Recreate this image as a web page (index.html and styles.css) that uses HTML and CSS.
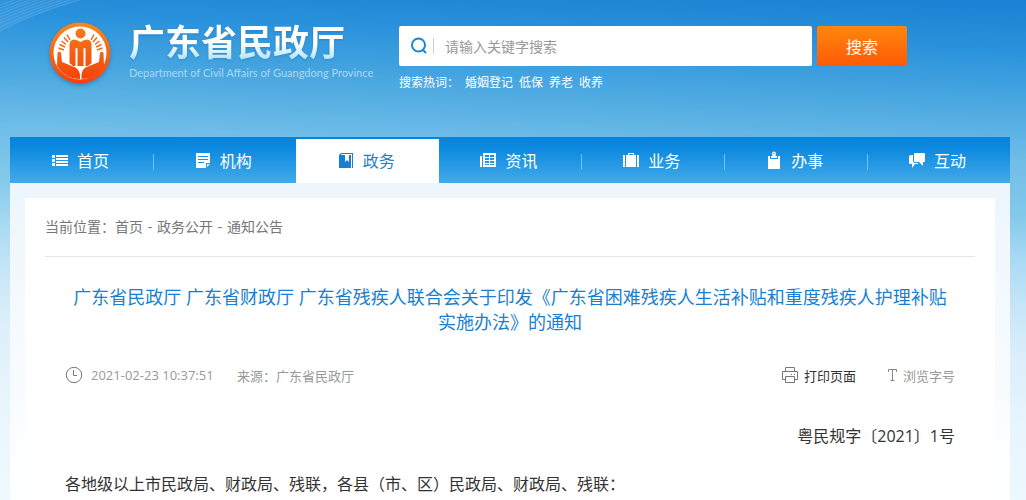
FILE: index.html
```html
<!DOCTYPE html>
<html lang="zh-CN">
<head>
<meta charset="utf-8">
<meta name="viewport" content="width=device-width, initial-scale=1">
<title>广东省民政厅</title>
<link rel="stylesheet" href="styles.css">
</head>
<body>
<svg class="waves" width="90" height="34" viewBox="0 0 90 34" aria-hidden="true">
  <path class="wave-fill" d="M0 0H80Q36 12 0 31Z"/>
  <path class="wave-line" d="M0 5L14 0M0 8L22 0M0 11L30 0M0 14Q18 6 38 0M0 17Q22 8 46 0M0 20Q26 9 54 0M0 23Q28 11 62 0M0 27Q32 12 70 0M0 31Q36 12 80 0"/>
</svg>
<div class="page">
  <header class="header">
    <a class="brand" href="#">
      <svg class="emblem" width="66" height="66" viewBox="0 0 66 66" aria-hidden="true">
        <defs>
          <linearGradient id="orange" x1="0" y1="0" x2="0" y2="1"><stop offset="0" stop-color="#f98a1c"/><stop offset="1" stop-color="#f4420c"/></linearGradient>
          <linearGradient id="figure" gradientUnits="userSpaceOnUse" x1="0" y1="8" x2="0" y2="58"><stop offset="0" stop-color="#f67a1a"/><stop offset="1" stop-color="#f4450d"/></linearGradient>
        </defs>
        <circle cx="33" cy="33" r="30.500" fill="url(#orange)"/>
        <circle cx="33" cy="33" r="26.500" fill="#fff"/>
        <g fill="url(#figure)">
          <circle cx="33.500" cy="13.500" r="5"/>
          <path d="M27 19.500Q30 19.500 33.500 22Q37 19.500 40 19.500Q44.500 20 44.500 25V43L41 46H26L22.500 43V25Q22.500 20 27 19.500Z"/>
          <path d="M10.500 33Q12.500 30.500 14 33L15 42L26 46.500Q32 48 33 55V59Q18 59 10 46Z"/>
          <path d="M56.500 33Q54.500 30.500 53 33L52 42L41 46.500Q35 48 34.500 55V59Q49 59 57 46Z"/>
        </g>
        <path d="M29.500 47V29M37.500 47V29" stroke="#fff" stroke-width="2" stroke-linecap="round"/>
        <path d="M31 48H36L33.500 53Z" fill="#fff"/>
        <path d="M11.500 28L17 30M12.500 24.500L18 27M14.500 21L19 24.500M17 17.500L21 22M20 14.500L23 20M55.500 28L50 30M54.500 24.500L49 27M52.500 21L48 24.500M50 17.500L46 22M47 14.500L44 20" stroke="#f4681a" stroke-width="1.500" fill="none"/>
      </svg>
      <span class="brand-text">
        <span class="brand-name">广东省民政厅</span>
        <span class="brand-sub">Department of Civil Affairs of Guangdong Province</span>
      </span>
    </a>
    <form class="search" role="search">
      <div class="search-row">
        <div class="search-box">
          <svg width="18" height="18" viewBox="0 0 18 18" fill="none" stroke="#1c86d2" stroke-width="2" aria-hidden="true"><circle cx="8.500" cy="8" r="6.500"/><path d="M12.500 12.500L16 16"/></svg>
          <input class="search-input" type="text" aria-label="搜索" placeholder="请输入关键字搜索">
        </div>
        <button class="search-button" type="submit">搜索</button>
      </div>
      <div class="hot"><span class="hot-label">搜索热词：</span><a href="#">婚姻登记</a><a href="#">低保</a><a href="#">养老</a><a href="#">收养</a></div>
    </form>
  </header>

  <nav class="nav">
    <a class="nav-item" href="#"><svg width="18" height="18" viewBox="0 0 18 18" fill="currentColor" aria-hidden="true"><path d="M1 4h3v3H1zM1 8h3v3H1zM1 12h3v3H1zM5 4h12v2H5zM5 7h12v2H5zM5 10h12v2H5zM5 13h12v2H5z"/></svg>首页</a>
    <a class="nav-item" href="#"><svg width="18" height="18" viewBox="0 0 18 18" fill="currentColor" aria-hidden="true"><path fill-rule="evenodd" d="M2 2h14v10h-4v5H2zM4 5v1h10V5zM4 8v1h10V8zM4 11v1h6v-1zM13 13h3l-3 3z"/></svg>机构</a>
    <a class="nav-item active" href="#" aria-current="page"><svg width="18" height="18" viewBox="0 0 18 18" fill="currentColor" aria-hidden="true"><path fill-rule="evenodd" d="M4 2h12v15h-1V3H4v1h10v13H2V4zM8 4v7l2-2 2 2V4z"/></svg>政务</a>
    <a class="nav-item" href="#"><svg width="18" height="18" viewBox="0 0 18 18" fill="currentColor" aria-hidden="true"><path fill-rule="evenodd" d="M4 2h13v14H4zM6 4v2h4V4zM11 4v2h4V4zM6 7v2h4V7zM11 7v2h4V7zM6 10v2h4v-2zM11 10v2h4v-2zM6 13v1h4v-1zM11 13v1h4v-1zM1 5h2v11H1z"/></svg>资讯</a>
    <a class="nav-item" href="#"><svg width="18" height="18" viewBox="0 0 18 18" fill="currentColor" aria-hidden="true"><path fill-rule="evenodd" d="M6 4V2h6v2h2v12H4V4zM7 3v1h4V3zM1 4h2v12H1zM15 4h2v12h-2z"/></svg>业务</a>
    <a class="nav-item" href="#"><svg width="18" height="18" viewBox="0 0 18 18" fill="currentColor" aria-hidden="true"><path fill-rule="evenodd" d="M3 5h2v3h8V5h2v13H3zM6 7V5h1.500V4a2 2 0 1 1 3 0v1H12v2zM8.200 2.500a.8.8 0 1 0 1.600 0a.8.8 0 1 0-1.600 0z"/></svg>办事</a>
    <a class="nav-item" href="#"><svg width="18" height="18" viewBox="0 0 18 18" fill="currentColor" aria-hidden="true"><path d="M7 2h9q1 0 1 1v7q0 1-1 1h-1v4l-4-4H7q-1 0-1-1V3q0-1 1-1zM4 4h1v6l1 2h4v1H7l-3 4v-4H2q-1 0-1-1V6q0-2 2-2z"/></svg>互动</a>
  </nav>

  <main class="content">
    <article class="sheet">
      <div class="crumbs"><span>当前位置：</span><a href="#">首页</a><span class="sep">-</span><a href="#">政务公开</a><span class="sep">-</span><a href="#">通知公告</a></div>
      <div class="article">
        <h1 class="title">广东省民政厅 广东省财政厅 广东省残疾人联合会关于印发《广东省困难残疾人生活补贴和重度残疾人护理补贴实施办法》的通知</h1>
        <div class="meta">
          <svg width="18" height="18" viewBox="0 0 18 18" fill="none" stroke="#777" aria-hidden="true"><circle cx="9" cy="9" r="7.700"/><path d="M8.500 4v5.500H12"/></svg>
          <time class="date" datetime="2021-02-23T10:37:51">2021-02-23 10:37:51</time>
          <span class="source">来源：广东省民政厅</span>
          <button class="tool print" type="button"><svg width="18" height="18" viewBox="0 0 18 18" fill="none" stroke="#777" aria-hidden="true"><path d="M4.500 5.500v-4h9v4M4.500 13.500h-3v-8h15v8h-3M4.500 10.500h9v6h-9zM10 8.500h1M13 8.500h1"/></svg>打印页面</button>
          <button class="tool size" type="button"><svg width="11" height="14" viewBox="0 0 11 14" fill="none" stroke="#888" aria-hidden="true"><path d="M1.500 4V1.500h8V4M5.500 1.500v11M3.500 12.500h4"/></svg>浏览字号</button>
        </div>
        <p class="doc-no">粤民规字〔2021〕1号</p>
        <p class="body-text">各地级以上市民政局、财政局、残联，各县（市、区）民政局、财政局、残联：</p>
      </div>
    </article>
  </main>
</div>
</body>
</html>
```
FILE: styles.css
```css
* { box-sizing: border-box; }

body {
  margin: 0;
  padding: 0 16px 0 10px;
  min-height: 100vh;
  font-family: "Open Sans", "Noto Sans CJK SC", sans-serif;
  font-size: 14px;
  color: #333;
  background: linear-gradient(182deg, #1a80d3 0, #2a92dc 50px, #4ba8e0 105px, #6fbde8 160px, #83c9ea 215px, #a9daf3 260px, #c8e6f8 310px, #dceffb 360px, #e8f5fd 430px, #eff9fe 530px) no-repeat #eff9fe;
}

a { color: inherit; text-decoration: none; }
button { font: inherit; border: 0; padding: 0; cursor: pointer; }

.waves { position: absolute; left: 0; top: 0; }
.wave-fill { fill: #fff; opacity: .06; }
.wave-line { fill: none; stroke: #9bd3f5; stroke-width: .6; opacity: .4; }

.page {
  max-width: 1000px;
  margin: 0 auto;
}

.header { position: relative; display: flex; height: 137px; padding: 20px 0 0 37px; }
.brand { display: flex; gap: 16px; width: 352px; flex: none; }
.emblem { flex: none; filter: drop-shadow(0 2px 2px rgba(20, 80, 140, .4)); }
.brand-text { display: flex; flex-direction: column; white-space: nowrap; }
.brand-name {
  font-size: 36px;
  line-height: 46px;
  font-weight: 700;
  color: transparent;
  background: linear-gradient(#fff 50%, #b5e4fb 85%);
  -webkit-background-clip: text;
  background-clip: text;
  filter: drop-shadow(0 1px 1px rgba(20, 90, 160, .3));
}
.brand-sub { font-size: 11px; line-height: 14px; color: #a9d8f5; font-family: Lato, sans-serif; }

.search { flex: 1; padding-top: 6px; max-width: 508px; }
.search-row { display: flex; gap: 5px; }
.search-box {
  display: flex;
  align-items: center;
  flex: 1;
  height: 40px;
  padding: 0 11px;
  background: #fff;
  border-radius: 2px;
}
.search-input {
  flex: 1;
  height: 16px;
  margin-left: 5px;
  padding: 0 0 0 11px;
  border: 0;
  border-left: 1px solid #ccc;
  outline: 0;
  font: inherit;
  background: none;
}
.search-input::placeholder { color: #999; }
.search-button {
  width: 90px;
  height: 40px;
  border-radius: 2px;
  font-size: 16px;
  color: #fff;
  background: linear-gradient(#ff870d, #fe5a06);
}
.hot { display: flex; gap: 6px; margin-top: 8px; font-size: 12px; line-height: 18px; color: #fff; }
.hot-label { width: 60px; }

.nav {
  display: grid;
  grid-template-columns: repeat(7, 1fr);
  height: 46px;
  padding-top: 2px;
  background: linear-gradient(#0783dc, #0a87de 20%, #42aaea);
}
.nav-item {
  position: relative;
  display: flex;
  align-items: center;
  justify-content: center;
  gap: 8px;
  padding: 0 3px 2px 0;
  font-size: 16px;
  color: #fff;
}
.nav-item::after {
  content: "";
  position: absolute;
  right: -1px;
  top: 15px;
  width: 1px;
  height: 16px;
  background: #75c3f1;
}
.nav-item:nth-child(2)::after,
.nav-item.active::after,
.nav-item:last-child::after { display: none; }
.nav-item.active { color: #1a7fd0; background: #fff; }

.content { padding: 15px 15px 0; background: linear-gradient(#edf6fd, #fdfeff 280px); }
.sheet { padding: 0 20px; background: #fff; }
.crumbs {
  display: flex;
  height: 59px;
  line-height: 58px;
  color: #777;
  border-bottom: 1px solid #e6e6e6;
}
.sep { width: 14px; text-align: center; }
.article { padding: 28px 20px 6px; }
.title {
  margin: 0;
  font-size: 18px;
  line-height: 25px;
  font-weight: 400;
  text-align: center;
  color: #1a7fd0;
}
.meta { display: flex; align-items: center; margin-top: 28px; height: 24px; font-size: 13px; color: #999; }
.date { margin-left: 8px; width: 128px; white-space: nowrap; }
.source { margin-left: 18px; margin-right: auto; }
.tool { display: flex; align-items: center; background: none; color: #999; }
.print { gap: 5px; color: #333; margin-right: 31px; }
.size { gap: 5px; }
.doc-no { margin: 37px 0 0; font-size: 16px; line-height: 24px; text-align: right; }
.body-text { margin: 24px 0 0; font-size: 16px; line-height: 24px; }
```
